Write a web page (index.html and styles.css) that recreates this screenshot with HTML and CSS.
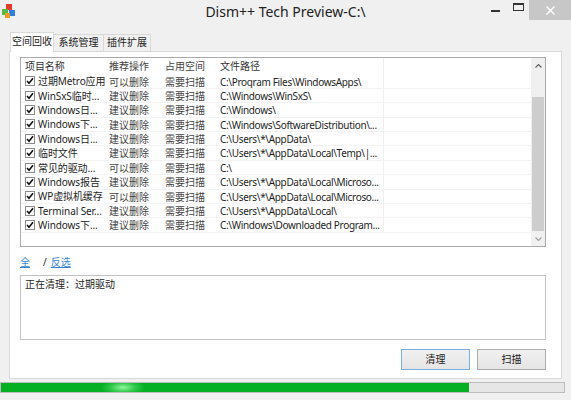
FILE: index.html
```html
<!DOCTYPE html>
<html>
<head>
<meta charset="utf-8">
<link rel="stylesheet" href="styles.css">
</head>
<body>
<div class="window">
  <div class="titlebar">
    <div class="tb-left">
      <svg class="appicon" width="14" height="14" viewBox="0 0 14 14">
        <rect x="4" y="0" width="6" height="6" fill="#e53b2c"/>
        <rect x="0" y="5" width="6" height="6" fill="#58b947"/>
        <rect x="7" y="6" width="6" height="6" fill="#2f7fe0"/>
        <rect x="3" y="9" width="5" height="5" fill="#f29b1d"/>
      </svg>
    </div>
    <div class="title">Dism++ Tech Preview-C:\</div>
    <div class="controls">
      <div class="ctl ctl-min"><span class="dash"></span></div>
      <div class="ctl ctl-max"><span class="box"></span></div>
      <div class="ctl ctl-close">
        <svg width="9" height="9" viewBox="0 0 9 9"><path d="M0.5 0.5 L8.5 8.5 M8.5 0.5 L0.5 8.5" stroke="#fff" stroke-width="1.4"/></svg>
      </div>
    </div>
  </div>

  <div class="tabs">
    <div class="tab active">空间回收</div>
    <div class="tab t2">系统管理</div>
    <div class="tab t3">插件扩展</div>
  </div>

  <div class="panel">
    <div class="list">
      <div class="grid">
        <div class="row head">
          <div class="c c1">项目名称</div>
          <div class="c c2">推荐操作</div>
          <div class="c c3">占用空间</div>
          <div class="c c4">文件路径</div>
          <div class="c c5"></div>
        </div>
        <div class="row"><div class="c c1"><span class="chk"></span>过期Metro应用</div><div class="c c2">可以删除</div><div class="c c3">需要扫描</div><div class="c c4">C:\Program Files\WindowsApps\</div><div class="c c5"></div></div>
        <div class="row"><div class="c c1"><span class="chk"></span>WinSxS临时...</div><div class="c c2">建议删除</div><div class="c c3">需要扫描</div><div class="c c4">C:\Windows\WinSxS\</div><div class="c c5"></div></div>
        <div class="row"><div class="c c1"><span class="chk"></span>Windows日...</div><div class="c c2">建议删除</div><div class="c c3">需要扫描</div><div class="c c4">C:\Windows\</div><div class="c c5"></div></div>
        <div class="row"><div class="c c1"><span class="chk"></span>Windows下...</div><div class="c c2">建议删除</div><div class="c c3">需要扫描</div><div class="c c4">C:\Windows\SoftwareDistribution\...</div><div class="c c5"></div></div>
        <div class="row"><div class="c c1"><span class="chk"></span>Windows日...</div><div class="c c2">建议删除</div><div class="c c3">需要扫描</div><div class="c c4">C:\Users\*\AppData\</div><div class="c c5"></div></div>
        <div class="row"><div class="c c1"><span class="chk"></span>临时文件</div><div class="c c2">建议删除</div><div class="c c3">需要扫描</div><div class="c c4">C:\Users\*\AppData\Local\Temp\|...</div><div class="c c5"></div></div>
        <div class="row"><div class="c c1"><span class="chk"></span>常见的驱动...</div><div class="c c2">可以删除</div><div class="c c3">需要扫描</div><div class="c c4">C:\</div><div class="c c5"></div></div>
        <div class="row"><div class="c c1"><span class="chk"></span>Windows报告</div><div class="c c2">建议删除</div><div class="c c3">需要扫描</div><div class="c c4">C:\Users\*\AppData\Local\Microso...</div><div class="c c5"></div></div>
        <div class="row"><div class="c c1"><span class="chk"></span>WP虚拟机缓存</div><div class="c c2">可以删除</div><div class="c c3">需要扫描</div><div class="c c4">C:\Users\*\AppData\Local\Microso...</div><div class="c c5"></div></div>
        <div class="row"><div class="c c1"><span class="chk"></span>Terminal Ser...</div><div class="c c2">建议删除</div><div class="c c3">需要扫描</div><div class="c c4">C:\Users\*\AppData\Local\</div><div class="c c5"></div></div>
        <div class="row"><div class="c c1"><span class="chk"></span>Windows下...</div><div class="c c2">建议删除</div><div class="c c3">需要扫描</div><div class="c c4">C:\Windows\Downloaded Program...</div><div class="c c5"></div></div>
      </div>
      <div class="scrollbar">
        <div class="arrow up"><svg width="7" height="4" viewBox="0 0 7 4"><path d="M0.5 3.5 L3.5 0.5 L6.5 3.5" fill="none" stroke="#606060" stroke-width="1.1"/></svg></div>
        <div class="track"><div class="thumb"></div></div>
        <div class="arrow down"><svg width="7" height="4" viewBox="0 0 7 4"><path d="M0.5 0.5 L3.5 3.5 L6.5 0.5" fill="none" stroke="#a0a0a0" stroke-width="1.1"/></svg></div>
      </div>
    </div>

    <div class="links">
      <span class="link">全</span><span class="slash">/</span><span class="link">反选</span>
    </div>

    <div class="log">正在清理：过期驱动</div>

    <div class="buttons">
      <div class="btn primary">清理</div>
      <div class="btn">扫描</div>
    </div>
  </div>

  <div class="progress">
    <div class="fill" style="width: 468px"></div>
  </div>
</div>
</body>
</html>
```

FILE: styles.css
```css
* { box-sizing: border-box; }
html, body { margin: 0; padding: 0; }
body {
  width: 571px;
  height: 400px;
  overflow: hidden;
  font-family: "Noto Sans", "Noto Sans CJK SC", sans-serif;
  font-size: 10px;
  color: #1e1e1e;
  background: #f0f0f0;
}
.window {
  width: 571px;
  height: 400px;
  display: flex;
  flex-direction: column;
  background: #f0f0f0;
}
.titlebar {
  height: 27px;
  display: grid;
  grid-template-columns: 1fr auto 1fr;
  align-items: start;
}
.tb-left { padding: 4px 0 0 2px; }
.appicon { display: block; }
.title {
  font-size: 14px;
  line-height: 14px;
  padding-top: 5px;
  color: #222;
  white-space: nowrap;
}
.controls {
  display: flex;
  justify-content: flex-end;
}
.ctl {
  height: 20px;
  display: flex;
  align-items: center;
  justify-content: center;
}
.ctl-min { width: 26px; }
.ctl-max { width: 21px; }
.ctl-close { width: 42px; background: #c7c7c7; }
.dash { width: 9px; height: 2px; background: #333; margin-top: 2px; }
.box { width: 11px; height: 8px; border: 1px solid #333; border-top-width: 2px; margin-top: -6px; }

.tabs {
  margin-top: 5px;
  padding-left: 10px;
  display: flex;
  align-items: flex-end;
  height: 19px;
  position: relative;
  z-index: 1;
}
.tab {
  height: 17px;
  border: 1px solid #d9d9d9;
  border-bottom: none;
  background: #f0f0f0;
  text-align: center;
  line-height: 15px;
  color: #222;
}
.tab.active {
  height: 20px;
  margin-bottom: -1px;
  background: #fff;
  width: 44px;
  line-height: 16px;
}
.tab.t2 { width: 50px; border-left: none; }
.tab.t3 { width: 47px; border-left: none; }

.panel {
  margin: 0 9px;
  height: 328px;
  background: #fff;
  border: 1px solid #d9d9d9;
  padding: 5px 15px 0 10px;
  display: flex;
  flex-direction: column;
}
.list {
  height: 190px;
  border: 1px solid #ababab;
  display: flex;
  flex-shrink: 0;
}
.grid { flex: 1; display: flex; flex-direction: column; }
.row {
  display: grid;
  grid-template-columns: 84px 56px 55px 168px 1fr;
  height: 14.4px;
  line-height: 14px;
}
.row.head { height: 16.5px; line-height: 16px; color: #333; }
.c {
  padding-left: 4px;
  white-space: nowrap;
  overflow: hidden;
  border-bottom: 1px solid #f3f3f3;
}
.c4 { border-right: 1px solid #f0f0f0; letter-spacing: -0.33px; }
.head .c { border-bottom: none; }
.head .c4 { letter-spacing: 0; }
.c1 { display: flex; align-items: center; letter-spacing: -0.1px; }
.c2, .c3 { color: #444; }
.chk {
  width: 10px;
  height: 10px;
  border: 1px solid #8a8a8a;
  margin-right: 3px;
  flex-shrink: 0;
  background: #fff url("data:image/svg+xml;utf8,<svg xmlns='http://www.w3.org/2000/svg' width='8' height='8' viewBox='0 0 8 8'><path d='M1 4 L3 6.3 L7 1.3' fill='none' stroke='%23111' stroke-width='1.6'/></svg>") center/8px 8px no-repeat;
}

.scrollbar {
  width: 14px;
  display: flex;
  flex-direction: column;
  background: #f0f0f0;
}
.arrow {
  height: 15px;
  display: flex;
  align-items: center;
  justify-content: center;
}
.track { flex: 1; padding: 24px 1px 0 1px; }
.thumb { height: 134px; background: #cdcdcd; }

.links {
  height: 28px;
  display: flex;
  align-items: center;
  padding-top: 1px;
}
.link {
  color: #3a86d4;
  text-decoration: underline;
}
.slash { margin: 0 4px 0 13px; color: #222; }

.log {
  height: 65px;
  border: 1px solid #c4c4c4;
  padding: 1px 4px;
  line-height: 14px;
  flex-shrink: 0;
}
.buttons {
  margin-top: 9px;
  display: flex;
  justify-content: flex-end;
  gap: 7px;
}
.btn {
  width: 69px;
  height: 21px;
  border: 1px solid #acacac;
  background: linear-gradient(#f0f0f0, #e5e5e5);
  text-align: center;
  line-height: 19px;
  color: #222;
}
.btn.primary { border-color: #7aaee3; }

.progress {
  margin-top: 3px;
  width: 565px;
  height: 11px;
  border: 1px solid #bcbcbc;
  background: #e6e6e6;
}
.fill {
  height: 100%;
  background:
    radial-gradient(ellipse 22px 8px at 122px 50%, rgba(160, 255, 170, 0.9), rgba(100, 230, 120, 0.4) 60%, rgba(6, 176, 37, 0) 100%),
    #06b025;
}
```
